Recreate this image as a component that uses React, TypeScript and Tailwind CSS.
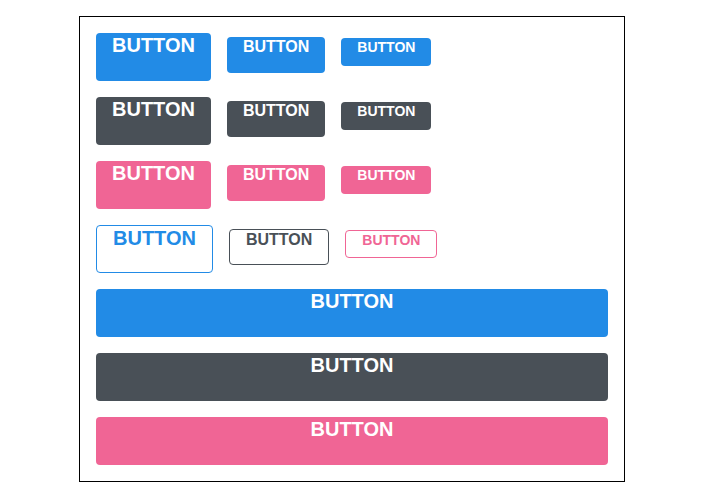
import React from 'react';

type Variant = 'blue' | 'dark' | 'pink';
type Size = 'lg' | 'md' | 'sm';

const filled: Record<Variant, string> = {
  blue: 'bg-[#228be6] text-white',
  dark: 'bg-[#495057] text-white',
  pink: 'bg-[#f06595] text-white',
};

const outline: Record<Variant, string> = {
  blue: 'border border-[#228be6] text-[#228be6] bg-white',
  dark: 'border border-[#495057] text-[#495057] bg-white',
  pink: 'border border-[#f06595] text-[#f06595] bg-white',
};

const sizes: Record<Size, string> = {
  lg: 'h-12 text-[20px]',
  md: 'h-9 text-[16px]',
  sm: 'h-7 text-[14px]',
};

const Button: React.FC<{ variant: Variant; size?: Size; outlined?: boolean; full?: boolean }> = ({
  variant,
  size = 'lg',
  outlined = false,
  full = false,
}) => (
  <button
    className={`flex items-start justify-center px-4 pt-px rounded font-bold leading-[normal] ${sizes[size]} ${
      outlined ? outline[variant] : filled[variant]
    } ${full ? 'w-full' : ''}`}
  >
    BUTTON
  </button>
);

export default function App() {
  const colors: Variant[] = ['blue', 'dark', 'pink'];

  return (
    <div className="min-h-screen bg-white pt-4" style={{ fontFamily: '"Liberation Sans", Arial, sans-serif' }}>
      <div className="ml-[79px] w-[546px] border border-black p-4 flex flex-col gap-4">
        {/* Filled sizes */}
        {colors.map((c) => (
          <div key={c} className="flex items-baseline gap-4">
            <Button variant={c} size="lg" />
            <Button variant={c} size="md" />
            <Button variant={c} size="sm" />
          </div>
        ))}

        {/* Outline */}
        <div className="flex items-baseline gap-4">
          <Button variant="blue" size="lg" outlined />
          <Button variant="dark" size="md" outlined />
          <Button variant="pink" size="sm" outlined />
        </div>

        {/* Full width */}
        {colors.map((c) => (
          <Button key={`full-${c}`} variant={c} full />
        ))}
      </div>
    </div>
  );
}
